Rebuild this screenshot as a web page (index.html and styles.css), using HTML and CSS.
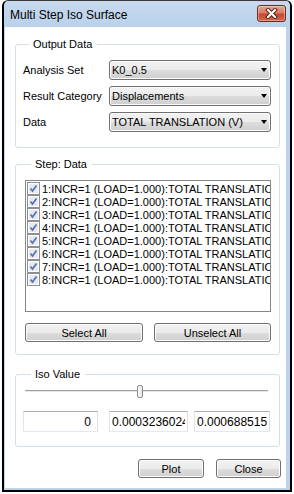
FILE: index.html
```html
<!DOCTYPE html>
<html lang="en">
<head>
    <meta charset="UTF-8">
    <meta name="viewport" content="width=device-width, initial-scale=1.0">
    <link rel="stylesheet" href="styles.css">
    <title>Multi Step Iso Surface</title>
</head>
<body>
    <svg width="0" height="0" class="defs">
        <symbol id="chk" viewBox="0 0 13 13">
            <rect x="0.5" y="0.5" width="12" height="12" fill="#fff" stroke="#8f8f8f"/>
            <rect x="2" y="2" width="9" height="9" fill="#e6eaf0"/>
            <path d="M3.5 6.5 L5.5 9 L9.5 3.5" fill="none" stroke="#5b74b0" stroke-width="1.8"/>
        </symbol>
    </svg>
    <div class="window">
        <div class="titlebar">
            <span class="title">Multi Step Iso Surface</span>
            <button class="close" aria-label="Close">
                <svg width="13" height="11" viewBox="0 0 13 11">
                    <path d="M3 2 L10 9 M10 2 L3 9" stroke="#5a2418" stroke-width="4" stroke-linecap="square"/>
                    <path d="M3 2 L10 9 M10 2 L3 9" stroke="#fff" stroke-width="2" stroke-linecap="square"/>
                </svg>
            </button>
        </div>
        <div class="client">
            <fieldset class="group output">
                <legend>Output Data</legend>
                <div class="form">
                    <label>Analysis Set</label>
                    <div class="combo"><span>K0_0.5</span><i class="arrow"></i></div>
                    <label>Result Category</label>
                    <div class="combo"><span>Displacements</span><i class="arrow"></i></div>
                    <label>Data</label>
                    <div class="combo"><span>TOTAL TRANSLATION (V)</span><i class="arrow"></i></div>
                </div>
            </fieldset>
            <fieldset class="group steps">
                <legend>Step: Data</legend>
                <ul class="list">
                    <li><svg class="check"><use href="#chk"/></svg>1:INCR=1 (LOAD=1.000):TOTAL TRANSLATION (V)</li>
                    <li><svg class="check"><use href="#chk"/></svg>2:INCR=1 (LOAD=1.000):TOTAL TRANSLATION (V)</li>
                    <li><svg class="check"><use href="#chk"/></svg>3:INCR=1 (LOAD=1.000):TOTAL TRANSLATION (V)</li>
                    <li><svg class="check"><use href="#chk"/></svg>4:INCR=1 (LOAD=1.000):TOTAL TRANSLATION (V)</li>
                    <li><svg class="check"><use href="#chk"/></svg>5:INCR=1 (LOAD=1.000):TOTAL TRANSLATION (V)</li>
                    <li><svg class="check"><use href="#chk"/></svg>6:INCR=1 (LOAD=1.000):TOTAL TRANSLATION (V)</li>
                    <li><svg class="check"><use href="#chk"/></svg>7:INCR=1 (LOAD=1.000):TOTAL TRANSLATION (V)</li>
                    <li><svg class="check"><use href="#chk"/></svg>8:INCR=1 (LOAD=1.000):TOTAL TRANSLATION (V)</li>
                </ul>
                <div class="row-buttons">
                    <button class="btn select">Select All</button>
                    <button class="btn unselect">Unselect All</button>
                </div>
            </fieldset>
            <fieldset class="group iso">
                <legend>Iso Value</legend>
                <div class="slider"><span class="thumb"></span></div>
                <div class="values">
                    <input class="v0" type="text" value="0">
                    <input class="v1" type="text" value="0.0003236024">
                    <input class="v2" type="text" value="0.0006885158">
                </div>
            </fieldset>
            <div class="actions">
                <button class="btn plot">Plot</button>
                <button class="btn closebtn">Close</button>
            </div>
        </div>
    </div>
</body>
</html>
```

FILE: styles.css
```css
*, ::after, ::before{
    margin: 0;
    padding: 0;
    box-sizing: border-box;
}
body{
    background: #fff;
    font-family: 'Liberation Sans', Arial, sans-serif;
    font-size: 11px;
    color: #000;
}
.defs{
    position: absolute;
}
.window{
    margin-left: 2px;
    width: 290px;
    height: 492px;
    display: flex;
    flex-direction: column;
    background: #bcd3ea;
    border: 2px solid #000;
    border-top: 1px solid #3a3a3a;
    border-radius: 6px 6px 0 0;
}
.titlebar{
    height: 27px;
    display: flex;
    align-items: center;
    justify-content: space-between;
    padding: 1px 4px 0 6px;
    background: linear-gradient(#c6daef, #b9d1ea);
    border-radius: 5px 5px 0 0;
    .title{
        font-size: 12px;
        color: #000;
    }
    .close{
        width: 29px;
        height: 17px;
        margin-top: -2px;
        display: flex;
        justify-content: center;
        align-items: center;
        border: 1px solid #6b2e22;
        border-radius: 3px;
        background: linear-gradient(#e8a595, #d77b66 45%, #c5492f 55%, #d2674c);
        box-shadow: inset 0 0 0 1px rgba(255,255,255,0.35);
    }
}
.client{
    flex: 1;
    margin: 0 4px 2px 1px;
    background: #fff;
    padding: 11px 6px 10px 10px;
    display: flex;
    flex-direction: column;
}
.group{
    border: 1px solid #d5dfe5;
    border-radius: 3px;
    min-inline-size: 0;
    legend{
        margin-left: 6px;
        padding: 0 5px 0 4px;
        line-height: 13px;
    }
}
.output{
    padding: 9px 8px 15px 7px;
    .form{
        display: grid;
        grid-template-columns: 86px 1fr;
        grid-auto-rows: 20px;
        row-gap: 6px;
        align-items: center;
    }
}
.combo{
    height: 20px;
    display: flex;
    align-items: center;
    justify-content: space-between;
    padding: 0 3px 0 2px;
    border: 1px solid #707070;
    border-radius: 3px;
    background: linear-gradient(#f2f2f2, #ebebeb 50%, #dddddd 50%, #cfcfcf);
    box-shadow: inset 0 0 0 1px #fcfcfc;
    .arrow{
        width: 0;
        height: 0;
        border-left: 3.5px solid transparent;
        border-right: 3.5px solid transparent;
        border-top: 4px solid #000;
    }
}
.group + .group{
    margin-top: 10px;
}
.steps{
    padding: 9px 8px 12px 9px;
}
.list{
    list-style: none;
    height: 132px;
    padding: 1px 0 0 1px;
    border: 1px solid #828790;
    overflow: hidden;
    li{
        display: flex;
        align-items: center;
        height: 13px;
        white-space: nowrap;
    }
    .check{
        width: 13px;
        height: 13px;
        flex: none;
        margin-right: 2px;
    }
}
.btn{
    height: 19px;
    font-family: inherit;
    font-size: 11px;
    color: #000;
    border: 1px solid #707070;
    border-radius: 3px;
    background: linear-gradient(#f2f2f2, #ebebeb 50%, #dddddd 50%, #cfcfcf);
    box-shadow: inset 0 0 0 1px #fcfcfc;
}
.row-buttons{
    display: flex;
    gap: 11px;
    margin-top: 11px;
    .select{
        width: 118px;
    }
    .unselect{
        width: 117px;
    }
}
.group.iso{
    margin-top: 13px;
    padding: 2px 8px 14px 9px;
}
.slider{
    height: 16px;
    display: flex;
    align-items: center;
    width: 243px;
    background: linear-gradient(transparent 7px, #a0a0a0 7px, #a0a0a0 8px, #e6e6e6 8px, #e6e6e6 9px, transparent 9px);
    .thumb{
        width: 6px;
        height: 13px;
        margin-left: 112px;
        border: 1px solid #8c8c8c;
        border-radius: 2px;
        background: linear-gradient(90deg, #fdfdfd, #e3e3e3);
    }
}
.values{
    display: flex;
    margin: 12px 0 0 -2px;
    input{
        height: 21px;
        font-family: inherit;
        font-size: 12px;
        color: #000;
        padding: 0 2px;
        border: 1px solid;
        border-color: #abadb3 #dbdfe6 #e3e9ef #e2e3ea;
        outline: none;
    }
    .v0{
        width: 75px;
        text-align: right;
        padding-right: 6px;
    }
    .v1{
        width: 79px;
        margin-left: 11px;
    }
    .v2{
        width: 76px;
        margin-left: 6px;
    }
}
.actions{
    display: flex;
    justify-content: flex-end;
    gap: 12px;
    margin-top: 12px;
    margin-right: -1px;
    .plot{
        width: 66px;
    }
    .closebtn{
        width: 65px;
    }
}
```
